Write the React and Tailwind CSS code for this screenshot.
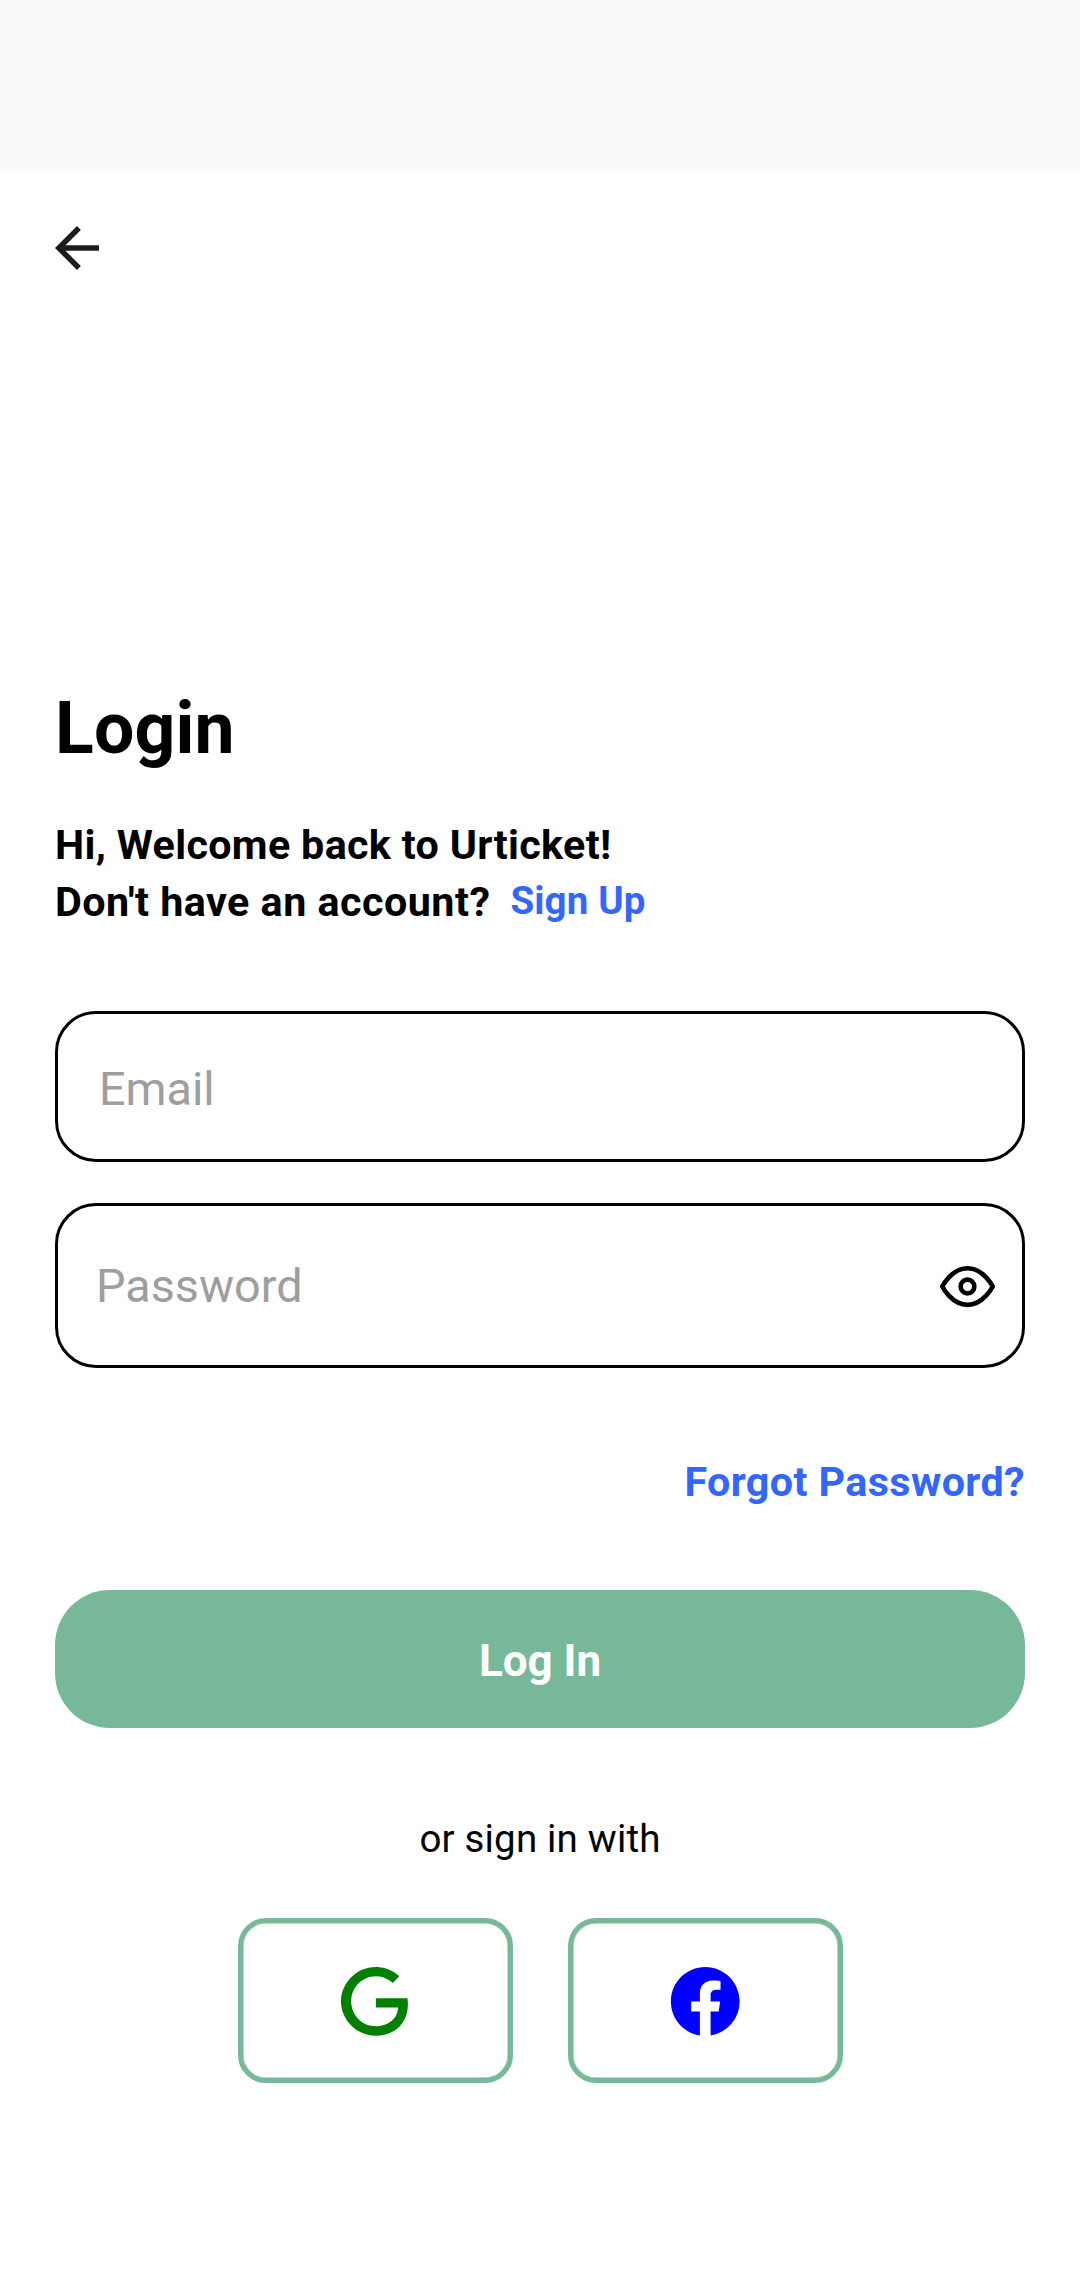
import React from "react";

const BackIcon = () => (
  <svg className="-ml-[11px] block size-[66px]" viewBox="0 0 24 24" fill="#1c1c1c">
    <path d="M20 11H7.83l5.59-5.59L12 4l-8 8 8 8 1.41-1.41L7.83 13H20v-2z" />
  </svg>
);

const EyeIcon = () => (
  <svg className="mt-[2px] block size-[55px] shrink-0" viewBox="0 0 24 24" fill="none" stroke="#000" strokeWidth="2" strokeLinecap="round" strokeLinejoin="round">
    <path d="M1 12s4-8 11-8 11 8 11 8-4 8-11 8-11-8-11-8z" />
    <circle cx="12" cy="12" r="3" />
  </svg>
);

const GoogleIcon = () => (
  <svg className="block size-[82.5px]" viewBox="0 0 24 24" fill="#008000">
    <path d="M21.35 11.1H12.18V13.83H18.69C18.36 17.64 15.19 19.27 12.19 19.27C8.36 19.27 5 16.25 5 12C5 7.9 8.2 4.73 12.2 4.73C15.29 4.73 17.1 6.7 17.1 6.7L19 4.72C19 4.72 16.56 2 12.1 2C6.42 2 2.03 6.8 2.03 12C2.03 17.05 6.16 22 12.25 22C17.6 22 21.5 18.33 21.5 12.91C21.5 11.76 21.35 11.1 21.35 11.1Z" />
  </svg>
);

const FacebookIcon = () => (
  <svg className="block size-[82.5px]" viewBox="0 0 24 24" fill="#0000ff">
    <path d="M12 2.04C6.5 2.04 2 6.53 2 12.06C2 17.06 5.66 21.21 10.44 21.96V14.96H7.9V12.06H10.44V9.85C10.44 7.34 11.93 5.96 14.22 5.96C15.31 5.96 16.45 6.15 16.45 6.15V8.62H15.19C13.95 8.62 13.56 9.39 13.56 10.18V12.06H16.34L15.89 14.96H13.56V21.96A10 10 0 0 0 22 12.06C22 6.53 17.5 2.04 12 2.04Z" />
  </svg>
);

const SocialButton = ({ label, children }) => (
  <button
    aria-label={label}
    className="flex h-[165px] w-[275px] items-center justify-center rounded-[28px] border-[5px] border-[#77b899] pt-[1.5px] shadow-[inset_0_0_0_0.5px_#77b899]"
  >
    {children}
  </button>
);

export default function App() {
  return (
    <div className="h-[2280px] w-[1080px] overflow-hidden bg-white font-['Roboto',sans-serif] text-black">
      <div className="h-[171px] bg-[#fafafa]" />
      <main className="flex flex-col px-[55px]">
        <button className="mt-[44px] w-[66px]" aria-label="Back"><BackIcon /></button>
        <h1 className="mt-[406px] text-[71.5px] leading-[83px] font-bold tracking-[0.2px]">Login</h1>
        <p className="mt-[47px] text-[41.25px] leading-[57px] font-bold tracking-[0.33px]">Hi, Welcome back to Urticket!</p>
        <div className="flex h-[57px] text-[41.25px] leading-[57px] font-bold tracking-[0.48px]">
          <span>Don't have an account?</span>
          <a className="ml-[20px] text-[38.5px] leading-[53px] tracking-[0.15px] text-[#3366ff]">Sign Up</a>
        </div>
        <input className="mt-[80px] h-[151px] rounded-[41px] border-[3px] border-black px-[41px] pt-[4px] text-[46.75px] placeholder:text-[#9e9e9e]" placeholder="Email" />
        <div className="mt-[41px] flex h-[165px] items-center rounded-[41px] border-[3px] border-black pr-[27px] pl-[38px]">
          <input className="min-w-0 grow pt-[2px] text-[46.75px] placeholder:text-[#9e9e9e]" placeholder="Password" />
          <EyeIcon />
        </div>
        <a className="mt-[86px] text-right text-[41.25px] leading-[57px] font-bold tracking-[0.4px] text-[#3366ff]">Forgot Password?</a>
        <button className="mt-[79px] h-[138px] rounded-[55px] bg-[#77b899] pt-[4px] text-[44px] font-bold text-white">Log In</button>
        <p className="mt-[86px] text-center text-[38.5px] leading-[50px] tracking-[0.18px]">or sign in with</p>
        <div className="mt-[54px] flex justify-center gap-[55px]">
          <SocialButton label="Google"><GoogleIcon /></SocialButton>
          <SocialButton label="Facebook"><FacebookIcon /></SocialButton>
        </div>
      </main>
    </div>
  );
}
